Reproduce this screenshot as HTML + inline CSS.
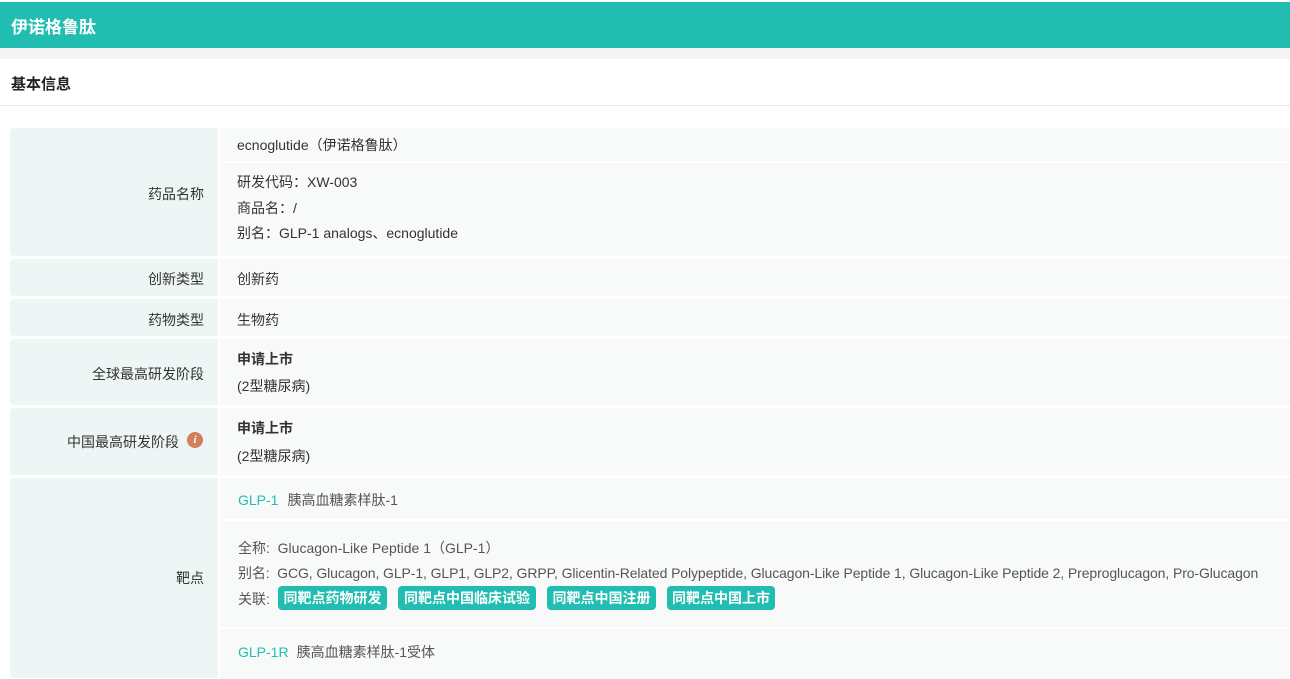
<!DOCTYPE html>
<html><head><meta charset="utf-8"><style>
*{margin:0;padding:0;box-sizing:border-box}
body{width:1290px;height:672px;overflow:hidden;background:#fff;font-family:"Liberation Sans","Noto Sans CJK SC",sans-serif;font-size:14px;color:#333;position:relative}
.a{position:absolute;white-space:nowrap}
.lab{position:absolute;left:10px;width:208px;background:#eef6f5;border-radius:4px 0 0 4px}
.val{position:absolute;left:220px;right:0;background:#f8fafa}
.l{position:absolute;right:1086px;white-space:nowrap;color:#333}
.tag{position:absolute;top:586px;height:24px;line-height:24px;background:#20bdb0;color:#fff;font-weight:bold;border-radius:4px;text-align:center;font-size:14px}
.g{color:#555}
.t{color:#20bdb0}
</style></head><body>
<div class="a" style="left:0;top:2px;width:1290px;height:46px;background:#20bdb0"></div>
<div class="a" style="left:11px;top:13px;color:#fff;font-size:17px;font-weight:bold">伊诺格鲁肽</div>
<div class="a" style="left:0;top:48px;width:1290px;height:11px;background:#f4f5f6"></div>
<div class="a" style="left:11px;top:73px;font-weight:bold;font-size:15px;color:#222">基本信息</div>
<div class="a" style="left:0;top:105px;width:1290px;height:1px;background:#e6e8e8"></div>

<div class="lab" style="top:128px;height:128px"></div>
<div class="val" style="top:128px;height:33px"></div>
<div class="val" style="top:163px;height:93px"></div>
<div class="l" style="top:184px">药品名称</div>
<div class="a" style="left:237px;top:135px">ecnoglutide（伊诺格鲁肽）</div>
<div class="a" style="left:237px;top:172px">研发代码：XW-003</div>
<div class="a" style="left:237px;top:198px">商品名：/</div>
<div class="a" style="left:237px;top:223px">别名：GLP-1 analogs、ecnoglutide</div>

<div class="lab" style="top:259px;height:37px"></div>
<div class="val" style="top:259px;height:37px"></div>
<div class="l" style="top:269px">创新类型</div>
<div class="a" style="left:237px;top:269px">创新药</div>

<div class="lab" style="top:299px;height:37px"></div>
<div class="val" style="top:299px;height:37px"></div>
<div class="l" style="top:310px">药物类型</div>
<div class="a" style="left:237px;top:310px">生物药</div>

<div class="lab" style="top:339px;height:66px"></div>
<div class="val" style="top:339px;height:66px"></div>
<div class="l" style="top:364px">全球最高研发阶段</div>
<div class="a" style="left:237px;top:349px;font-weight:bold">申请上市</div>
<div class="a" style="left:237px;top:376px">(2型糖尿病)</div>

<div class="lab" style="top:408px;height:67px"></div>
<div class="val" style="top:408px;height:67px"></div>
<div class="l" style="top:432px;right:1111px">中国最高研发阶段</div>
<div class="a" style="left:187px;top:432px;width:16px;height:16px;border-radius:50%;background:#d0805a;color:#fff;font-size:11px;font-style:italic;font-weight:bold;text-align:center;line-height:16px;font-family:'Liberation Serif',serif">i</div>
<div class="a" style="left:237px;top:418px;font-weight:bold">申请上市</div>
<div class="a" style="left:237px;top:446px">(2型糖尿病)</div>

<div class="lab" style="top:478px;height:200px"></div>
<div class="val" style="top:478px;height:41px"></div>
<div class="val" style="top:521px;height:106px"></div>
<div class="val" style="top:629px;height:50px"></div>
<div class="l" style="top:568px">靶点</div>
<div class="a" style="left:238px;top:490px"><span class="t">GLP-1</span><span class="g" style="margin-left:9px">胰高血糖素样肽-1</span></div>
<div class="a g" style="left:238px;top:538px">全称: &nbsp;Glucagon-Like Peptide 1（GLP-1）</div>
<div class="a g" style="left:238px;top:563px;letter-spacing:-0.1px">别名: &nbsp;GCG, Glucagon, GLP-1, GLP1, GLP2, GRPP, Glicentin-Related Polypeptide, Glucagon-Like Peptide 1, Glucagon-Like Peptide 2, Preproglucagon, Pro-Glucagon</div>
<div class="a g" style="left:238px;top:589px">关联:</div>
<div class="tag" style="left:278px;width:109px">同靶点药物研发</div>
<div class="tag" style="left:398px;width:138px">同靶点中国临床试验</div>
<div class="tag" style="left:547px;width:109px">同靶点中国注册</div>
<div class="tag" style="left:667px;width:108px">同靶点中国上市</div>
<div class="a" style="left:238px;top:642px"><span class="t">GLP-1R</span><span class="g" style="margin-left:8px">胰高血糖素样肽-1受体</span></div>
</body></html>
